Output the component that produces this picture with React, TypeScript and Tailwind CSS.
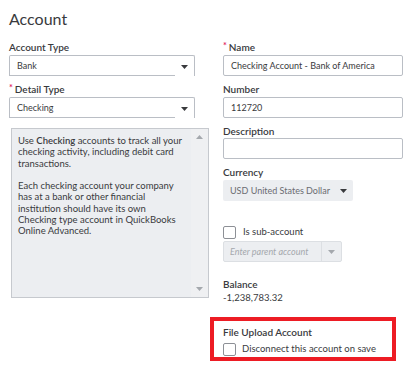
import React from 'react';

const Arrow = ({ muted }: { muted?: boolean }) => (
  <svg width="7" height="4" viewBox="0 0 7 4">
    <path d="M0 0h7L3.5 4z" fill={muted ? '#a4a8ad' : '#393a3d'} />
  </svg>
);

function Label({ children, required, className = '' }: { children: React.ReactNode; required?: boolean; className?: string }) {
  return (
    <div className={`h-[14px] leading-[14px] text-[10px] font-semibold flex items-center ${className}`}>
      {required && <span className="text-[#e2195b] text-[9px] mr-[2px] -mt-[2px]">*</span>}
      {children}
    </div>
  );
}

function Select({ value }: { value: string }) {
  return (
    <div className="mt-[1px] w-[186px] h-[21px] flex border-t border-l border-r border-[#babec5] rounded-t-[2px]">
      <div className="flex-1 border-b border-[#babec5] pl-[7px] text-[9px] leading-[20px]">{value}</div>
      <div className="w-[19px] flex items-center justify-center pt-[1px]">
        <Arrow />
      </div>
    </div>
  );
}

function Input({ value = '', className = '' }: { value?: string; className?: string }) {
  return (
    <div className={`w-[180px] h-[21px] border border-[#babec5] rounded-[2px] pl-[7px] text-[9px] leading-[19px] ${className}`}>
      {value}
    </div>
  );
}

const Checkbox = () => (
  <span className="inline-block w-[13px] h-[13px] border border-[#8d9096] rounded-[2px] bg-white shrink-0" />
);

export default function App() {
  return (
    <div className="w-[420px] h-[369px] bg-white font-[Lato,sans-serif] text-[#393a3d] pl-[9px] pt-[8px] overflow-hidden">
      <h1 className="h-[32px] text-[16px] leading-[22px]">Account</h1>
      <div className="flex">
        {/* left column */}
        <div className="w-[200px] flex flex-col">
          <Label>Account Type</Label>
          <Select value="Bank" />
          <Label required className="mt-[6px]">Detail Type</Label>
          <Select value="Checking" />
          <div className="mt-[10px] ml-[2px] w-[198px] h-[170px] flex bg-[#eceef1] border border-[#c6c9ce]">
            <div className="flex-1 pl-[6px] pr-[2px] pt-[6px] text-[9.5px] leading-[11.3px]">
              <p>
                Use <span className="font-semibold">Checking</span> accounts to track all your<br />
                checking activity, including debit card<br />
                transactions.
              </p>
              <p className="mt-[11.3px]">
                Each checking account your company<br />
                has at a bank or other financial<br />
                institution should have its own<br />
                Checking type account in QuickBooks<br />
                Online Advanced.
              </p>
            </div>
            <div className="w-[17px] bg-[#eff0f2] flex flex-col items-center justify-between py-[6px]">
              <svg width="7" height="4" viewBox="0 0 7 4"><path d="M0 4h7L3.5 0z" fill="#a4a8ad" /></svg>
              <Arrow muted />
            </div>
          </div>
        </div>

        {/* right column */}
        <div className="ml-[14px] w-[180px] flex flex-col">
          <Label required>Name</Label>
          <Input className="mt-[1px]" value="Checking Account - Bank of America" />
          <Label className="mt-[6px]">Number</Label>
          <Input className="mt-[1px]" value="112720" />
          <Label className="mt-[6px]">Description</Label>
          <Input />
          <Label className="mt-[6px]">Currency</Label>
          <div className="mt-[1px] w-[130px] h-[21px] flex bg-[#eceef1] rounded-[2px] text-[9px] text-[#6b6c72] leading-[21px]">
            <div className="flex-1 pl-[7px] whitespace-nowrap">USD United States Dollar</div>
            <div className="w-[20px] flex items-center justify-center"><Arrow /></div>
          </div>
          <div className="mt-[25px] flex items-center gap-[7px] h-[13px] text-[9.5px]">
            <Checkbox />
            <span>Is sub-account</span>
          </div>
          <div className="mt-[2px] w-[119px] h-[21px] flex bg-[#eceef1] border border-[#dcdfe3] rounded-[2px] text-[9px] italic text-[#a4a8ad] leading-[19px]">
            <div className="flex-1 pl-[6px] border-r border-[#dcdfe3] whitespace-nowrap">Enter parent account</div>
            <div className="w-[19px] flex items-center justify-center"><Arrow muted /></div>
          </div>
          <Label className="mt-[15px]">Balance</Label>
          <div className="h-[13px] leading-[13px] text-[9.5px]">-1,238,783.32</div>
          <div className="mt-[13px] -ml-[13px] w-[186px] h-[44px] border-4 border-[#ed1c24] pl-[9px] pt-[4px]">
            <Label>File Upload Account</Label>
            <div className="mt-[4px] flex items-center gap-[6px] h-[13px] text-[9.5px]">
              <Checkbox />
              <span>Disconnect this account on save</span>
            </div>
          </div>
        </div>
      </div>
    </div>
  );
}
